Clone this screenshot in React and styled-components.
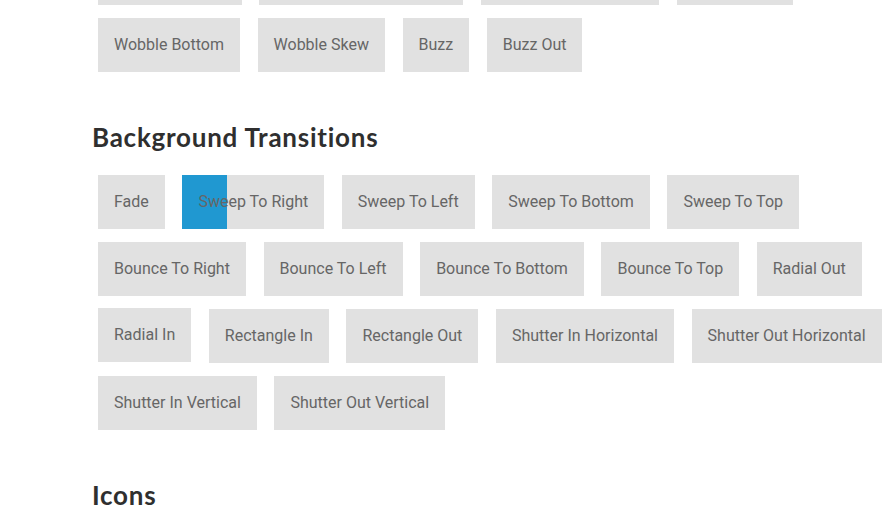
import styled, { createGlobalStyle } from "styled-components";

const GlobalStyle = createGlobalStyle`
  html, body {
    margin: 0;
    padding: 0;
    background: #ffffff;
    overflow: hidden;
  }
`;

const twoD = [
  "Wobble Vertical",
  "Wobble To Bottom Right",
  "Wobble To Top Right",
  "Wobble Top",
  "Wobble Bottom",
  "Wobble Skew",
  "Buzz",
  "Buzz Out",
];

const background = [
  "Fade",
  "Sweep To Right",
  "Sweep To Left",
  "Sweep To Bottom",
  "Sweep To Top",
  "Bounce To Right",
  "Bounce To Left",
  "Bounce To Bottom",
  "Bounce To Top",
  "Radial Out",
  "Radial In",
  "Rectangle In",
  "Rectangle Out",
  "Shutter In Horizontal",
  "Shutter Out Horizontal",
  "Shutter In Vertical",
  "Shutter Out Vertical",
];

export default function App() {
  return (
    <>
      <GlobalStyle />
      <Pagina>
        <Grade>
          {twoD.map((b) => (
            <Botao key={b}>{b}</Botao>
          ))}
        </Grade>

        <Titulo>Background Transitions</Titulo>
        <Grade>
          {background.map((b) => (
            <Botao key={b} $subir={b === "Radial In"}>
              {b === "Sweep To Right" && <Varrido $largura={45} />}
              <Texto>{b}</Texto>
            </Botao>
          ))}
        </Grade>

        <Titulo>Icons</Titulo>
      </Pagina>
    </>
  );
}

const Pagina = styled.div`
  margin-top: -49px;
  padding-left: 98px;
  width: 794px;
`;

const Grade = styled.div`
  display: flex;
  flex-wrap: wrap;
  align-items: flex-start;
  column-gap: 17.6px;
  row-gap: 13px;
`;

const Botao = styled.div`
  position: relative;
  overflow: hidden;
  padding: 16px;
  margin-top: ${(p) => (p.$subir ? "-1px" : "0")};
  background-color: #e1e1e1;
  color: #666666;
  font-family: "Roboto", "Liberation Sans", sans-serif;
  font-size: 16px;
  line-height: 22px;
  white-space: nowrap;
  cursor: pointer;
`;

const Texto = styled.span`
  position: relative;
`;

const Varrido = styled.span`
  position: absolute;
  top: 0;
  bottom: 0;
  left: 0;
  width: ${(p) => p.$largura}px;
  background-color: #2098d1;
`;

const Titulo = styled.h2`
  margin: 50px 0 23px -6px;
  font-family: "Lato", "Open Sans", sans-serif;
  font-weight: 700;
  font-size: 26px;
  line-height: 30px;
  letter-spacing: 0.75px;
  color: #2f2f2f;
`;
